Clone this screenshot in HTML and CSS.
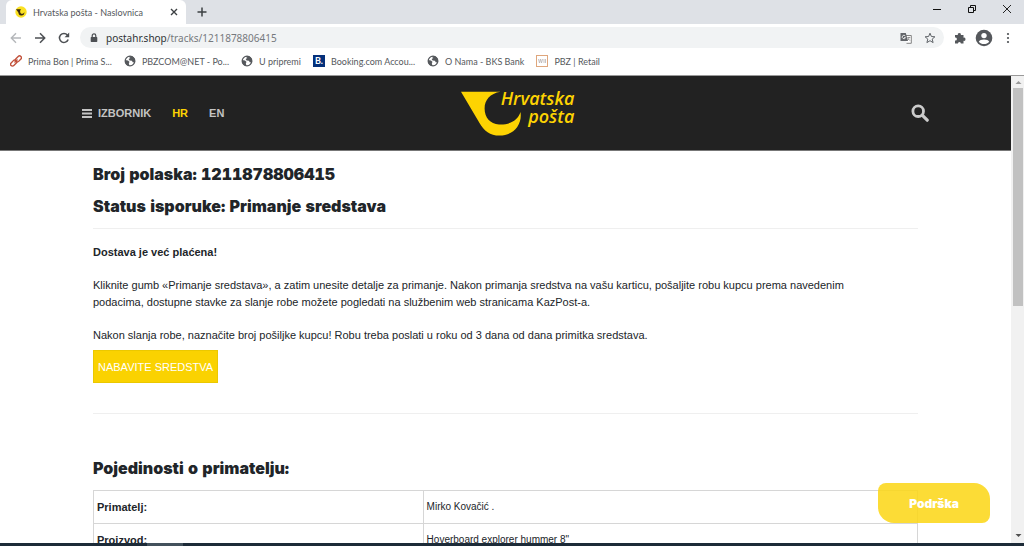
FILE: index.html
```html
<!DOCTYPE html>
<html lang="hr">
<head>
    <meta charset="UTF-8">
    <meta name="viewport" content="width=device-width, initial-scale=1.0">
    <title>Hrvatska pošta - Naslovnica</title>
    <link rel="stylesheet" href="styles.css">
</head>
<body>

<svg class="defs" width="0" height="0" aria-hidden="true">
    <symbol id="globe" viewBox="0 0 12 12">
        <circle cx="6" cy="6" r="4.800" fill="#fff" stroke="#55585c" stroke-width="1.300"/>
        <path d="M1 5l3 .5 1.600 1.500-.8 1 .6 2.800C2.500 10.800.8 8.500 1 5zM4.300 1.500L8 1l2.600 2.500.6 3.300-2.200.8-1.200-1.800-2.200-.3-1-1.500 1.800-1z" fill="#55585c"/>
    </symbol>
</svg>

<div class="tab-strip">
    <div class="tab">
        <svg class="favicon" viewBox="0 0 12 12">
            <circle cx="6" cy="6" r="5.700" fill="#fbe122"/>
            <path d="M1 3.200h5C4.600 4.800 5 7.600 7 7.800c1.300 0 2-.8 2.400-1.800C9.600 8.400 8 9.800 6.200 9.600 4 9.400 3.600 7.600 3.200 6.200z" fill="#3b2b10"/>
        </svg>
        <span class="tab-title">Hrvatska pošta - Naslovnica</span>
        <button class="icon-button" aria-label="Close tab">
            <svg width="8" height="8" viewBox="0 0 8 8"><path d="M1 1l6 6M7 1L1 7" stroke="#3c4043" stroke-width="1.400"/></svg>
        </button>
    </div>
    <button class="icon-button new-tab" aria-label="New tab">
        <svg width="10" height="10" viewBox="0 0 10 10"><path d="M5 .5v9M.5 5h9" stroke="#3c4043" stroke-width="1.500"/></svg>
    </button>
    <div class="window-buttons">
        <button class="icon-button" aria-label="Minimize">
            <svg width="10" height="10" viewBox="0 0 10 10"><path d="M1 5.500h8" stroke="#111"/></svg>
        </button>
        <button class="icon-button" aria-label="Restore">
            <svg width="10" height="10" viewBox="0 0 10 10" fill="none" stroke="#111"><path d="M1.500 3.500h5v5h-5zM3.500 3V1.500h5v5H7"/></svg>
        </button>
        <button class="icon-button" aria-label="Close">
            <svg width="10" height="10" viewBox="0 0 10 10"><path d="M1 1l8 8M9 1L1 9" stroke="#222"/></svg>
        </button>
    </div>
</div>

<div class="toolbar">
    <button class="icon-button" aria-label="Back">
        <svg width="12" height="12" viewBox="0 0 12 12" fill="none" stroke="#b4b7ba" stroke-width="1.400"><path d="M11 6H1.500M6 1.300L1.300 6 6 10.700"/></svg>
    </button>
    <button class="icon-button" aria-label="Forward">
        <svg width="12" height="12" viewBox="0 0 12 12" fill="none" stroke="#4d5054" stroke-width="1.500"><path d="M1 6h9.500M6 1.300L10.700 6 6 10.700"/></svg>
    </button>
    <button class="icon-button" aria-label="Reload">
        <svg width="12" height="12" viewBox="0 0 12 12"><path d="M10.200 7.500A4.500 4.500 0 1 1 9.400 3" fill="none" stroke="#4d5054" stroke-width="1.500"/><path d="M11.200.6v4.600H6.600z" fill="#4d5054"/></svg>
    </button>
    <div class="address-bar">
        <svg width="8" height="10" viewBox="0 0 8 10"><path d="M2.200 4.500V2.700a1.800 1.800 0 0 1 3.600 0v1.800" fill="none" stroke="#4d5054" stroke-width="1.200"/><rect x=".7" y="4" width="6.600" height="5" rx=".7" fill="#4d5054"/></svg>
        <span class="url"><span class="host">postahr.shop</span>/tracks/1211878806415</span>
        <button class="icon-button" aria-label="Translate">
            <svg width="12" height="12" viewBox="0 0 12 12"><path d="M5 3.500h6.300v7.800H6.500" fill="#fff" stroke="#777" stroke-width=".9"/><path d="M.5 1h5.300l2.200 8H.5z" fill="#63666a"/><path d="M5.300 4A1.700 1.700 0 1 0 5.500 5.600H4" fill="none" stroke="#fff" stroke-width=".8"/><path d="M7.300 5.500h3M9 4.800c0 2-.6 3-1.500 3.700M8 6.500l2 2.200" fill="none" stroke="#777" stroke-width=".7"/></svg>
        </button>
        <button class="icon-button" aria-label="Bookmark">
            <svg width="12" height="12" viewBox="0 0 12 12"><path d="M6 1.200l1.400 3.300 3.500.3-2.700 2.300.9 3.500L6 8.700l-3.100 1.900.9-3.500L1.100 4.800l3.500-.3z" fill="none" stroke="#5f6368"/></svg>
        </button>
    </div>
    <div class="toolbar-actions">
        <button class="icon-button" aria-label="Extensions">
            <svg width="12" height="12" viewBox="0 0 12 12"><path d="M1 3h2.800a1.600 1.600 0 1 1 3.100 0h2.600v2.700a1.600 1.600 0 1 1 0 3.100v2.600H6.900a1.500 1.500 0 1 0-3 0H1V8.500a1.500 1.500 0 1 0 0-2.900z" fill="#55585c"/></svg>
        </button>
        <button class="icon-button" aria-label="Profile">
            <svg width="18" height="18" viewBox="0 0 18 18"><circle cx="9" cy="9" r="8.300" fill="#55585c"/><circle cx="9" cy="6.600" r="2.700" fill="#fff"/><path d="M3.800 12.700c1-3 9.400-3 10.400 0-2.400 3.200-8 3.200-10.400 0z" fill="#fff"/></svg>
        </button>
        <button class="icon-button" aria-label="Menu">
            <svg width="12" height="12" viewBox="0 0 12 12" fill="#4d5054"><circle cx="6" cy="2" r="1.100"/><circle cx="6" cy="6" r="1.100"/><circle cx="6" cy="10" r="1.100"/></svg>
        </button>
    </div>
</div>

<nav class="bookmarks">
    <a href="#">
        <svg viewBox="0 0 12 12" fill="none" stroke="#c2523c" stroke-width="1.400"><rect x="4.900" y="2" width="7" height="3.800" rx="1.900" transform="rotate(-45 8.400 3.900)"/><rect x=".1" y="6.200" width="7" height="3.800" rx="1.900" transform="rotate(-45 3.600 8.100)"/><path d="M4.500 7.500l3-3"/></svg>
        Prima Bon | Prima S...
    </a>
    <a href="#"><svg><use href="#globe"/></svg>PBZCOM@NET - Po...</a>
    <a href="#"><svg><use href="#globe"/></svg>U pripremi</a>
    <a href="#"><span class="booking-icon">B.</span>Booking.com Accou...</a>
    <a href="#"><svg><use href="#globe"/></svg>O Nama - BKS Bank</a>
    <a href="#">
        <svg viewBox="0 0 12 12" fill="none"><rect x=".5" y=".5" width="11" height="11" stroke="#dfa67c"/><path d="M2.500 4l1 4 1-4 1 4 1-4M8 4v4M9.500 4v4" stroke="#b9b4b4" stroke-width=".8"/></svg>
        PBZ | Retail
    </a>
</nav>

<div class="viewport">
    <div class="page">
        <header>
            <nav class="menu">
                <a href="#" class="menu-toggle">
                    <svg width="10" height="9" viewBox="0 0 10 9"><path d="M0 1h10M0 4.500h10M0 8h10" stroke="#c4c4c4" stroke-width="1.800"/></svg>
                    IZBORNIK
                </a>
                <a href="#" class="active">HR</a>
                <a href="#">EN</a>
            </nav>
            <a href="#" class="logo">
                <svg width="60" height="45" viewBox="0 0 60 45"><path d="M0 .8H39.500C29 2.500 23.600 9 23.600 17.500c0 9 5.600 15.500 14.400 16 10.500.5 19-4 21.500-12.500C61.500 34 52 44.600 38.500 44.600c-9.500 0-15.500-4.600-20-12.600z" fill="#fdd302"/></svg>
                <span>Hrvatska<br>pošta</span>
            </a>
            <button class="icon-button search" aria-label="Traži">
                <svg width="18" height="18" viewBox="0 0 18 18" fill="none" stroke="#cbcbcb"><circle cx="7.200" cy="7.200" r="5.300" stroke-width="2.800"/><path d="M11.200 11.200l5 5" stroke-width="3.200" stroke-linecap="round"/></svg>
            </button>
        </header>

        <main class="container">
            <h2>Broj polaska: 1211878806415</h2>
            <h2>Status isporuke: Primanje sredstava</h2>
            <hr>
            <p><b>Dostava je već plaćena!</b></p>
            <p>Kliknite gumb «Primanje sredstava», a zatim unesite detalje za primanje. Nakon primanja sredstva na vašu karticu, pošaljite robu kupcu prema navedenim podacima, dostupne stavke za slanje robe možete pogledati na službenim web stranicama KazPost-a.</p>
            <p>Nakon slanja robe, naznačite broj pošiljke kupcu! Robu treba poslati u roku od 3 dana od dana primitka sredstava.</p>
            <button class="submit">NABAVITE SREDSTVA</button>
            <hr>
            <h2 class="details-title">Pojedinosti o primatelju:</h2>
            <table>
                <tbody>
                <tr>
                    <th scope="row">Primatelj:</th>
                    <td>Mirko Kovačić .</td>
                </tr>
                <tr>
                    <th scope="row">Proizvod:</th>
                    <td>Hoverboard explorer hummer 8"</td>
                </tr>
                </tbody>
            </table>
        </main>
    </div>

    <div class="scrollbar">
        <svg width="13" height="12" viewBox="0 0 13 12"><path d="M3.500 8l3-3 3 3z" fill="#999"/></svg>
        <div class="thumb"></div>
        <svg width="13" height="14" viewBox="0 0 13 14"><path d="M3.500 5l3 3 3-3z" fill="#505050"/></svg>
    </div>

    <button class="support">Podrška</button>
</div>

<div class="taskbar"><div class="task"></div></div>

</body>
</html>
```
FILE: styles.css
```css
* {
    box-sizing: border-box;
}

body {
    margin: 0;
    height: 100vh;
    display: flex;
    flex-direction: column;
    overflow: hidden;
    background-color: #FFFFFF;
    color: #212529;
    font-family: "Liberation Sans", Arial, sans-serif;
    font-size: 11px;
}

a {
    color: inherit;
    text-decoration: none;
}

svg {
    display: block;
    flex: none;
}

.defs {
    position: absolute;
}

.icon-button {
    display: flex;
    padding: 0;
    border: none;
    background: none;
    cursor: pointer;
}

/* browser window */
.tab-strip,
.toolbar,
.bookmarks {
    flex: none;
    display: flex;
    align-items: center;
    font-family: Lato, sans-serif;
    font-size: 9px;
    color: #55585C;
}

.tab-strip {
    height: 24px;
    padding-left: 6px;
    background-color: #DEE1E6;
}

.tab {
    display: flex;
    align-items: center;
    width: 180px;
    height: 24px;
    padding: 0 8px 0 9px;
    border-radius: 6px 6px 0 0;
    background-color: #FFFFFF;
}

.favicon {
    width: 12px;
    height: 12px;
}

.tab-title {
    flex: 1;
    margin-left: 6px;
    white-space: nowrap;
}

.new-tab {
    margin-left: 11px;
}

.window-buttons {
    display: flex;
    gap: 25px;
    height: 18px;
    align-items: center;
    align-self: flex-start;
    margin-left: auto;
    padding-right: 12px;
}

.toolbar {
    gap: 12px;
    height: 27px;
    padding: 0 10px;
}

.address-bar {
    flex: 1;
    display: flex;
    align-items: center;
    gap: 12px;
    height: 21px;
    margin: 0 -2px;
    padding: 0 8px 0 10px;
    border-radius: 11px;
    background-color: #F1F3F4;
    font-family: "Noto Sans", sans-serif;
    font-size: 10px;
    color: #76797D;
}

.url {
    flex: 1;
    margin-left: -4px;
}

.host {
    color: #303336;
}

.toolbar-actions {
    display: flex;
    align-items: center;
    gap: 9px;
}

.bookmarks {
    gap: 12px;
    height: 25px;
    padding: 0 10px 4px;
    border-bottom: 1px solid #999999;
}

.bookmarks a {
    display: flex;
    align-items: center;
    gap: 6px;
    white-space: nowrap;
}

.bookmarks svg,
.booking-icon {
    width: 12px;
    height: 12px;
}

.booking-icon {
    background-color: #04307A;
    color: #FFFFFF;
    font-weight: bold;
    line-height: 12px;
    text-align: center;
}

.viewport {
    position: relative;
    flex: 1;
    min-height: 0;
    display: flex;
}

/* page */
.page {
    flex: 1;
    overflow: hidden;
}

header {
    display: grid;
    grid-template-columns: 1fr auto 1fr;
    align-items: center;
    height: 75px;
    padding: 0 82px;
    background-color: #222222;
    border-bottom: 1px solid #777777;
    color: #C4C4C4;
}

.menu {
    display: flex;
    gap: 21px;
    font-weight: bold;
}

.menu-toggle {
    display: flex;
    align-items: center;
    gap: 6px;
}

.menu .active {
    color: #FDD302;
}

.logo {
    display: flex;
    padding-left: 24px;
    color: #FDD302;
    font-family: "Open Sans", sans-serif;
    font-size: 18px;
    font-style: italic;
    font-weight: 600;
    line-height: 18px;
    text-align: right;
}

.logo span {
    margin: -2px 0 0 -20px;
}

.search {
    justify-self: end;
}

.container {
    padding: 7px 93px;
}

h2 {
    margin: 0;
    font-family: Inter, "Arial Black", sans-serif;
    font-size: 16px;
    font-weight: 900;
    font-variant-numeric: tabular-nums;
    line-height: 32px;
}

hr {
    margin: 6px 0 15px;
    border: none;
    border-top: 1px solid #EFEFEF;
}

p {
    margin: 0 0 16px;
    padding-right: 24px;
    line-height: 17px;
}

.submit {
    display: block;
    height: 33px;
    margin: -10px 0 30px;
    padding: 0 4px;
    border: 1px solid #EBC800;
    background-color: #FAD201;
    color: #FFFFFF;
    font-family: inherit;
    font-size: 11px;
    cursor: pointer;
}

.details-title {
    margin-top: 38px;
}

table {
    width: 100%;
    margin-top: 6px;
    border-collapse: collapse;
    table-layout: fixed;
}

th,
td {
    height: 33px;
    padding: 0 3px 1px;
    border: 1px solid #D6D6D6;
    text-align: left;
}

th {
    width: 40%;
}

td {
    font-size: 10px;
}

.scrollbar {
    flex: none;
    display: flex;
    flex-direction: column;
    width: 13px;
    padding-left: 1px;
    background-color: #F1F1F1;
}

.scrollbar .thumb {
    width: 10px;
    height: 218px;
    margin: 0 1px auto;
    background-color: #C1C1C1;
}

.support {
    position: absolute;
    right: 34px;
    bottom: 20px;
    width: 112px;
    height: 40px;
    border: none;
    border-radius: 8px 16px;
    background-color: rgba(252, 215, 26, 0.88);
    color: #FFFFFF;
    font-family: Inter, "Arial Black", sans-serif;
    font-size: 12px;
    font-weight: 900;
    cursor: pointer;
}

.taskbar {
    flex: none;
    height: 3px;
    padding-left: 147px;
    background-color: #1D2B38;
}

.task {
    width: 36px;
    height: 3px;
    background-color: #43515C;
}
```
